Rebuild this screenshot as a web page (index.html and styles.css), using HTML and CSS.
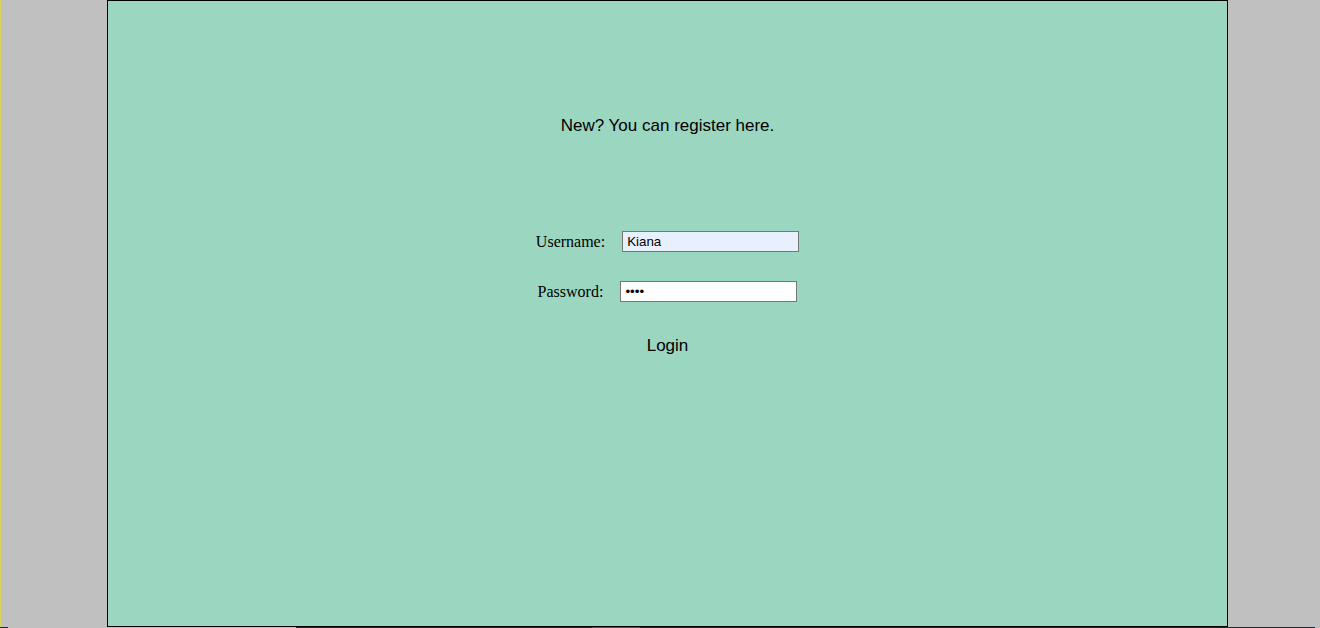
FILE: index.html
```html
<!DOCTYPE html>
<html lang="en">
<head>
<meta charset="utf-8">
<title>Login</title>
<link rel="stylesheet" href="styles.css">
</head>
<body>
<div class="page">
  <div class="stage">
    <main class="panel">
      <p class="register">New? You can register here.</p>
      <form class="form">
        <div class="row">
          <label class="label" for="user">Username:</label>
          <input class="field field-auto" id="user" type="text" value="Kiana">
        </div>
        <div class="row row-pass">
          <label class="label" for="pass">Password:</label>
          <input class="field" id="pass" type="password" value="abcd">
        </div>
        <button class="login" type="button">Login</button>
      </form>
    </main>
  </div>
  <div class="taskbar"></div>
</div>
</body>
</html>
```

FILE: styles.css
```css
html, body {
  margin: 0;
  padding: 0;
  background: #c0c0c0;
  height: 100%;
  overflow: hidden;
}

.page {
  display: flex;
  flex-direction: column;
  width: 1320px;
  height: 628px;
}

.stage {
  display: flex;
  height: 627px;
  border-left: 1px solid #d9d65a;
  box-sizing: border-box;
  padding-left: 106px;
}

.panel {
  box-sizing: border-box;
  width: 1121px;
  height: 627px;
  border: 1px solid #000;
  background: #9bd6c1;
  display: flex;
  flex-direction: column;
  align-items: center;
  padding-top: 115px;
}

.register {
  margin: 0;
  font-family: "Liberation Sans", Arial, sans-serif;
  font-size: 17px;
  line-height: 20px;
  color: #000;
}

.form {
  margin-top: 95px;
  display: flex;
  flex-direction: column;
  align-items: center;
}

.row {
  display: flex;
  align-items: center;
  height: 21px;
  gap: 17px;
}

.row-pass {
  margin-top: 29px;
}

.label {
  font-family: "Liberation Serif", "Times New Roman", serif;
  font-size: 16px;
  line-height: 20px;
  color: #000;
  padding-top: 0;
}

.field {
  box-sizing: border-box;
  width: 177px;
  height: 21px;
  border: 1px solid #767676;
  padding: 1px 4px;
  margin: 0;
  font-family: "Liberation Sans", Arial, sans-serif;
  font-size: 13.33px;
  color: #000;
  background: #fff;
  outline: none;
}

.field-auto {
  background: #e8f0fe;
}

.login {
  margin-top: 34px;
  padding: 0;
  border: 0;
  background: none;
  font-family: "Liberation Sans", Arial, sans-serif;
  font-size: 17px;
  line-height: 20px;
  color: #000;
  cursor: pointer;
}

.taskbar {
  height: 1px;
  background: linear-gradient(to right,
    #1e2a30 0 8px,
    #c0c0c0 8px 296px,
    #1e2a30 296px 592px,
    #4a5358 592px 640px,
    #1e2a30 640px 1315px,
    #c0c0c0 1315px);
}
```
